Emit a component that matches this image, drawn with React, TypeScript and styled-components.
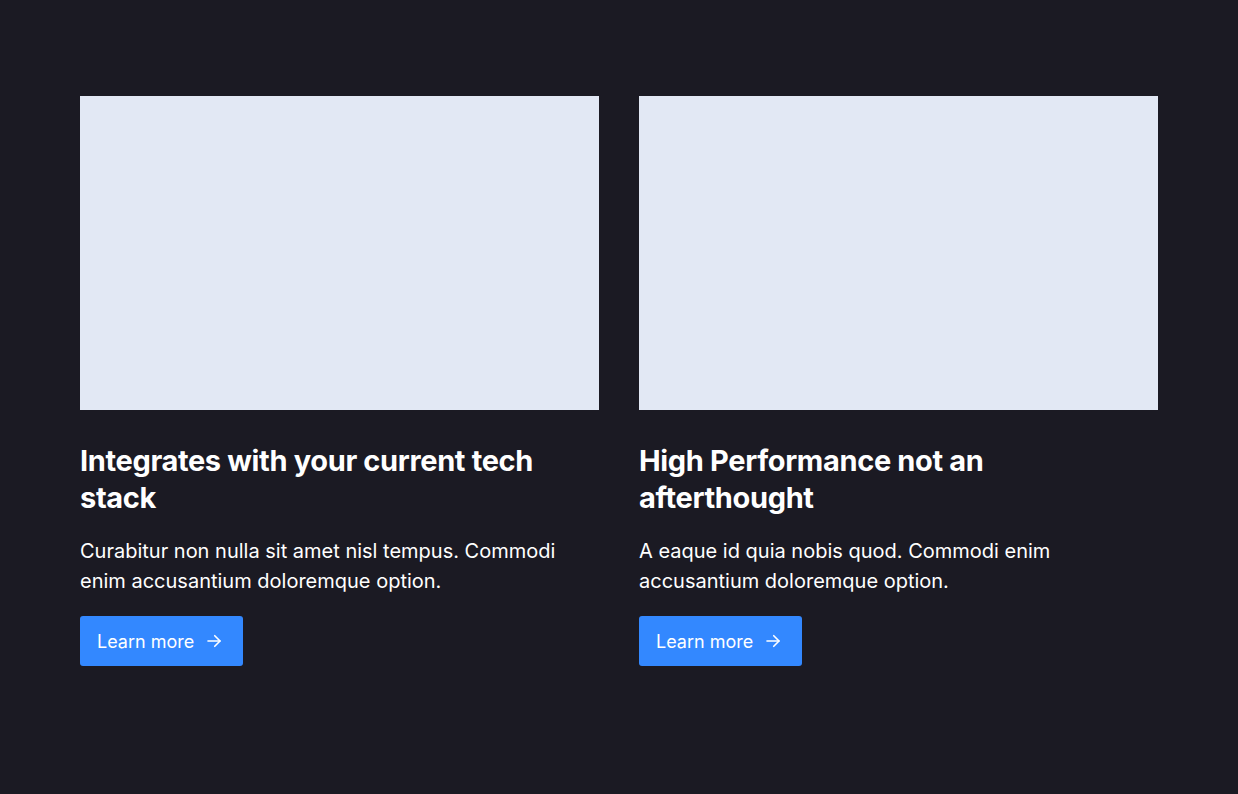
import React from "react";
import styled, { createGlobalStyle } from "styled-components";

const Global = createGlobalStyle`
  html, body { margin: 0; padding: 0; background: #1b1a23; }
  body { font-family: Inter, "Noto Sans", sans-serif; -webkit-font-smoothing: antialiased; }
  * { box-sizing: border-box; }
`;

const Page = styled.main`
  min-height: 794px;
  background: #1b1a23;
  padding: 96px 80px 0;
`;

const Grid = styled.div`
  display: grid;
  grid-template-columns: 1fr 1fr;
  column-gap: 40px;
  max-width: 1078px;
`;

const Card = styled.article`
  display: flex;
  flex-direction: column;
  align-items: flex-start;
`;

const Picture = styled.div`
  width: 100%;
  height: 314px;
  background: #e2e8f4;
`;

const Title = styled.h3`
  margin: 32px 0 0;
  font-size: 29px;
  line-height: 37px;
  font-weight: 700;
  letter-spacing: -0.012em;
  color: #ffffff;
`;

const Text = styled.p`
  margin: 20px 0 0;
  font-size: 20px;
  line-height: 30px;
  color: #ffffff;
`;

const Button = styled.a`
  margin-top: 20px;
  display: inline-flex;
  align-items: center;
  gap: 11px;
  height: 50px;
  padding: 0 20px 0 17px;
  background: #3388ff;
  border-radius: 3px;
  color: #ffffff;
  font-size: 18px;
  font-weight: 400;
  text-decoration: none;
`;

const Arrow = () => (
  <svg width="18" height="18" viewBox="0 0 24 24" fill="none" stroke="#fff" strokeWidth="2.2" strokeLinecap="round" strokeLinejoin="round">
    <path d="M4 12h16" />
    <path d="M13 5l7 7-7 7" />
  </svg>
);

const items = [
  {
    title: "Integrates with your current tech stack",
    text: "Curabitur non nulla sit amet nisl tempus. Commodi enim accusantium doloremque option.",
  },
  {
    title: "High Performance not an afterthought",
    text: "A eaque id quia nobis quod. Commodi enim accusantium doloremque option.",
  },
];

export default function App() {
  return (
    <>
      <Global />
      <Page>
        <Grid>
          {items.map((it) => (
            <Card key={it.title}>
              <Picture />
              <Title>{it.title}</Title>
              <Text>{it.text}</Text>
              <Button href="#">
                Learn more <Arrow />
              </Button>
            </Card>
          ))}
        </Grid>
      </Page>
    </>
  );
}
